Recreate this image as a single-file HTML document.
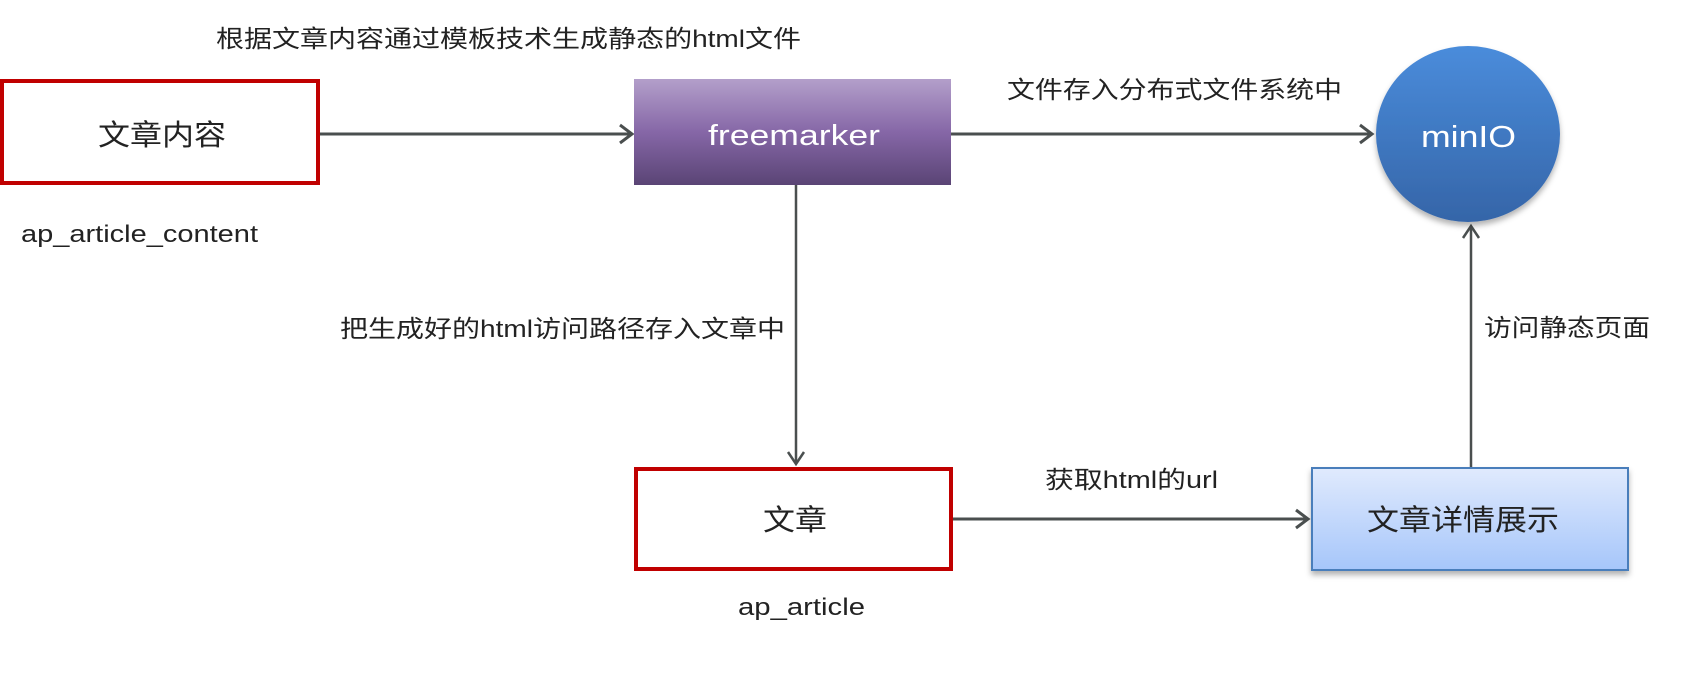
<!DOCTYPE html>
<html><head><meta charset="utf-8"><style>
html,body{margin:0;padding:0;background:#fff;width:1702px;height:684px;overflow:hidden}
text{font-family:"Liberation Sans","Noto Sans CJK SC",sans-serif;fill:#222}
</style></head><body>
<svg width="1702" height="684" viewBox="0 0 1702 684" xmlns="http://www.w3.org/2000/svg">
<defs>
<linearGradient id="pu" x1="0" y1="0" x2="0" y2="1"><stop offset="0" stop-color="#b39fca"/><stop offset="0.5" stop-color="#8667a7"/><stop offset="1" stop-color="#5a4475"/></linearGradient>
<linearGradient id="bl" x1="0" y1="0" x2="0" y2="1"><stop offset="0" stop-color="#4a8cdb"/><stop offset="1" stop-color="#3565a8"/></linearGradient>
<linearGradient id="lb" x1="0" y1="0" x2="0" y2="1"><stop offset="0" stop-color="#e0eafd"/><stop offset="1" stop-color="#a6c6fa"/></linearGradient>
<filter id="sh" x="-20%" y="-20%" width="140%" height="150%"><feDropShadow dx="0" dy="4" stdDeviation="3" flood-color="#000" flood-opacity="0.3"/></filter>
</defs>
<g stroke="#4a4f4f" stroke-width="3" fill="none">
<line x1="320" y1="134" x2="632" y2="134"/><polyline points="620,125 632,134 620,143"/>
<line x1="951" y1="134" x2="1372" y2="134"/><polyline points="1360,125 1372,134 1360,143"/>
<line x1="796" y1="185" x2="796" y2="464" stroke-width="2.5"/><polyline points="788,452 796,464 804,452" stroke-width="2.5"/>
<line x1="953" y1="519" x2="1308" y2="519"/><polyline points="1296,510 1308,519 1296,528"/>
<line x1="1471" y1="467" x2="1471" y2="226" stroke-width="2.5"/><polyline points="1463,238 1471,226 1479,238" stroke-width="2.5"/>
</g>
<rect x="2" y="81" width="316" height="102" fill="#fff" stroke="#c00000" stroke-width="4"/>
<rect x="634" y="79" width="317" height="106" fill="url(#pu)"/>
<ellipse cx="1468" cy="134" rx="92" ry="88" fill="url(#bl)" filter="url(#sh)"/>
<rect x="636" y="469" width="315" height="100" fill="#fff" stroke="#c00000" stroke-width="4"/>
<rect x="1312" y="468" width="316" height="102" fill="url(#lb)" stroke="#4a7ebb" stroke-width="2" filter="url(#sh)"/>
<text x="216" y="47" font-size="24" textLength="585" lengthAdjust="spacingAndGlyphs">根据文章内容通过模板技术生成静态的html文件</text>
<text x="98" y="145" font-size="29" textLength="128" lengthAdjust="spacingAndGlyphs">文章内容</text>
<text x="21" y="242" font-size="24" textLength="237" lengthAdjust="spacingAndGlyphs">ap_article_content</text>
<text x="708" y="145" font-size="29" textLength="172" lengthAdjust="spacingAndGlyphs" style="fill:#fff">freemarker</text>
<text x="1007" y="98" font-size="24" textLength="335" lengthAdjust="spacingAndGlyphs">文件存入分布式文件系统中</text>
<text x="1421" y="147" font-size="31" textLength="95" lengthAdjust="spacingAndGlyphs" style="fill:#fff">minIO</text>
<text x="340" y="337" font-size="24" textLength="445" lengthAdjust="spacingAndGlyphs">把生成好的html访问路径存入文章中</text>
<text x="1484" y="336" font-size="24" textLength="166" lengthAdjust="spacingAndGlyphs">访问静态页面</text>
<text x="1045" y="488" font-size="24" textLength="173" lengthAdjust="spacingAndGlyphs">获取html的url</text>
<text x="763" y="530" font-size="29" textLength="64" lengthAdjust="spacingAndGlyphs">文章</text>
<text x="1367" y="530" font-size="29" textLength="192" lengthAdjust="spacingAndGlyphs">文章详情展示</text>
<text x="738" y="615" font-size="24" textLength="127" lengthAdjust="spacingAndGlyphs">ap_article</text>
</svg>
</body></html>
